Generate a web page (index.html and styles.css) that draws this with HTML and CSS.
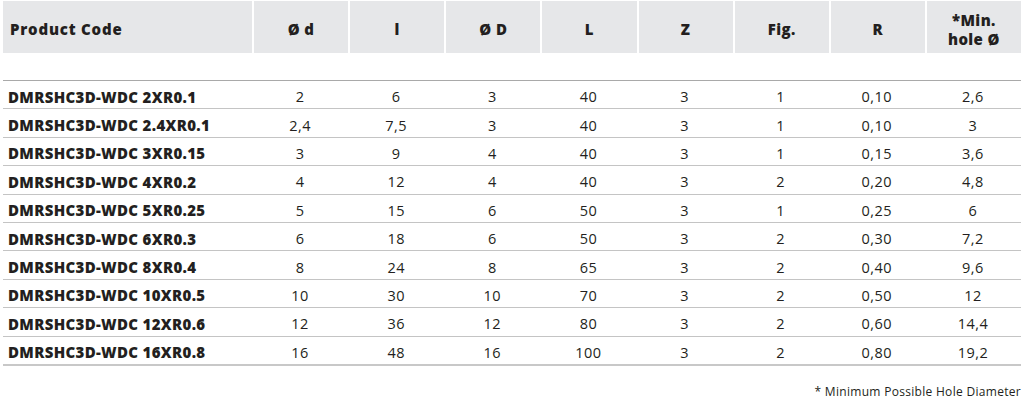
FILE: index.html
```html
<!DOCTYPE html>
<html>
<head>
<meta charset="utf-8">
<link rel="stylesheet" href="styles.css">
</head>
<body>
<div class="page">
<table class="spec">
  <colgroup>
    <col class="c-code"><col><col><col><col><col><col><col><col>
  </colgroup>
  <thead>
    <tr class="head">
      <th class="code">Product Code</th>
      <th>Ø d</th>
      <th>l</th>
      <th>Ø D</th>
      <th>L</th>
      <th>Z</th>
      <th>Fig.</th>
      <th>R</th>
      <th>*Min.<br>hole Ø</th>
    </tr>
    <tr class="spacer"><td colspan="9"></td></tr>
  </thead>
  <tbody>
    <tr><td class="code">DMRSHC3D-WDC 2XR0.1</td><td>2</td><td>6</td><td>3</td><td>40</td><td>3</td><td>1</td><td>0,10</td><td>2,6</td></tr>
    <tr><td class="code">DMRSHC3D-WDC 2.4XR0.1</td><td>2,4</td><td>7,5</td><td>3</td><td>40</td><td>3</td><td>1</td><td>0,10</td><td>3</td></tr>
    <tr><td class="code">DMRSHC3D-WDC 3XR0.15</td><td>3</td><td>9</td><td>4</td><td>40</td><td>3</td><td>1</td><td>0,15</td><td>3,6</td></tr>
    <tr><td class="code">DMRSHC3D-WDC 4XR0.2</td><td>4</td><td>12</td><td>4</td><td>40</td><td>3</td><td>2</td><td>0,20</td><td>4,8</td></tr>
    <tr><td class="code">DMRSHC3D-WDC 5XR0.25</td><td>5</td><td>15</td><td>6</td><td>50</td><td>3</td><td>1</td><td>0,25</td><td>6</td></tr>
    <tr><td class="code">DMRSHC3D-WDC 6XR0.3</td><td>6</td><td>18</td><td>6</td><td>50</td><td>3</td><td>2</td><td>0,30</td><td>7,2</td></tr>
    <tr><td class="code">DMRSHC3D-WDC 8XR0.4</td><td>8</td><td>24</td><td>8</td><td>65</td><td>3</td><td>2</td><td>0,40</td><td>9,6</td></tr>
    <tr><td class="code">DMRSHC3D-WDC 10XR0.5</td><td>10</td><td>30</td><td>10</td><td>70</td><td>3</td><td>2</td><td>0,50</td><td>12</td></tr>
    <tr><td class="code">DMRSHC3D-WDC 12XR0.6</td><td>12</td><td>36</td><td>12</td><td>80</td><td>3</td><td>2</td><td>0,60</td><td>14,4</td></tr>
    <tr><td class="code">DMRSHC3D-WDC 16XR0.8</td><td>16</td><td>48</td><td>16</td><td>100</td><td>3</td><td>2</td><td>0,80</td><td>19,2</td></tr>
  </tbody>
</table>
<p class="note">* Minimum Possible Hole Diameter</p>
</div>
</body>
</html>
```
FILE: styles.css
```css
html, body {
  margin: 0;
  padding: 0;
  background: #ffffff;
}
body {
  font-family: "Open Sans", "Liberation Sans", sans-serif;
  color: #231f20;
}
.page {
  padding: 1px 0 0 3px;
}
.spec {
  width: 1018px;
  table-layout: fixed;
  border-collapse: separate;
  border-spacing: 0;
}
.spec col.c-code {
  width: 249px;
}
.head th {
  background: #e6e7e9;
  height: 47px;
  padding: 5px 0 0;
  font-size: 15px;
  font-weight: 800;
  line-height: 19px;
  letter-spacing: 0.4px;
  text-align: center;
  border-left: 2px solid #ffffff;
}
.head th.code {
  text-align: left;
  padding-left: 7px;
  letter-spacing: 0.8px;
  border-left: 0;
}
.spacer td {
  height: 27px;
  padding: 0;
  border-bottom: 1px solid #a9a9a9;
}
tbody td {
  height: 23.4px;
  padding: 4px 0 0;
  font-size: 14.5px;
  letter-spacing: 0.5px;
  text-align: center;
  border-bottom: 1px solid #c4c4c4;
  vertical-align: middle;
}
tbody tr:last-child td {
  border-bottom: 2px solid #c8c8c8;
}
tbody td.code {
  text-align: left;
  padding-left: 5px;
  font-size: 15px;
  font-weight: 800;
  letter-spacing: 0.33px;
}
.note {
  margin: 17px 0 0;
  text-align: right;
  font-size: 12px;
  letter-spacing: 0.3px;
  color: #231f20;
}
```
